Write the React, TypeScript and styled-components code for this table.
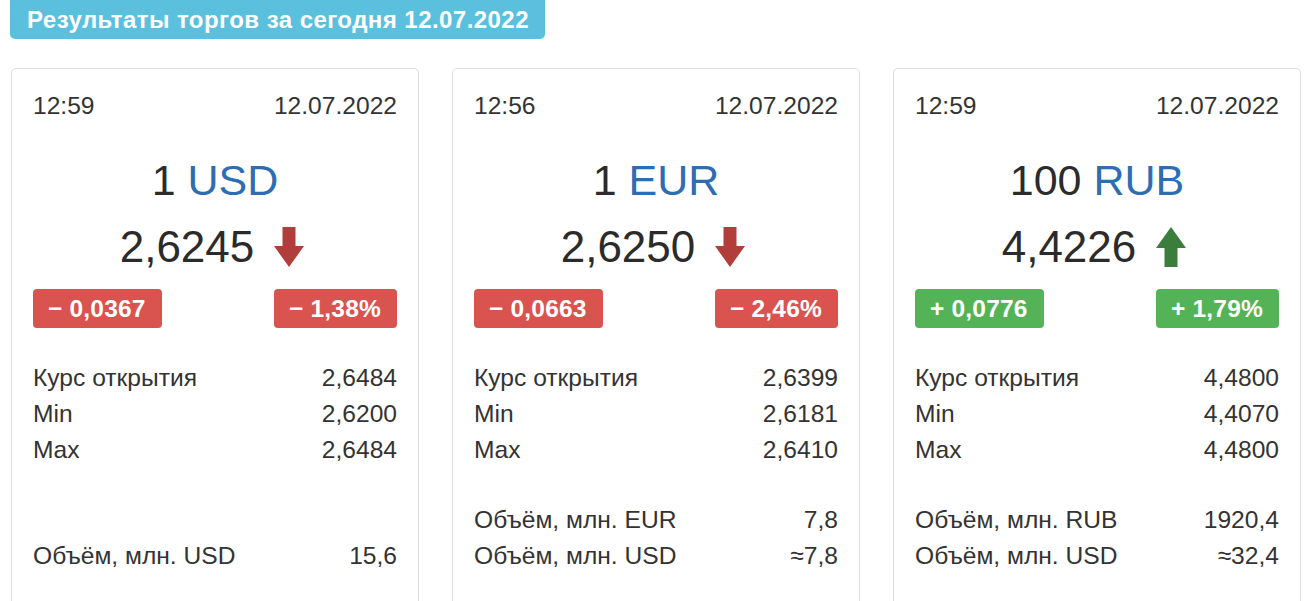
import React from "react";
import styled, { createGlobalStyle } from "styled-components";

const Global = createGlobalStyle`
  html, body { margin: 0; padding: 0; background: #fff; }
  body { font-family: "Liberation Sans", Arial, sans-serif; color: #333; }
`;

const Page = styled.div`
  padding: 0 4px 0 11px;
  display: flex;
  flex-direction: column;
`;

const Heading = styled.div`
  align-self: flex-start;
  margin-left: -1px;
  background: #5bc0de;
  color: #fff;
  font-weight: 700;
  font-size: 24px;
  line-height: 39px;
  height: 39px;
  padding: 0 16px 0 17px;
  border-radius: 0 0 5px 5px;
  letter-spacing: 0.45px;
`;

const Cards = styled.div`
  margin-top: 29px;
  display: grid;
  grid-template-columns: repeat(3, 408px);
  column-gap: 33px;
  align-items: stretch;
`;

const Card = styled.div`
  border: 1px solid #dedede;
  border-radius: 5px;
  padding: 19px 21px 40px 21px;
  display: flex;
  flex-direction: column;
`;

const TopRow = styled.div`
  display: flex;
  justify-content: space-between;
  font-size: 24.6px;
  line-height: 36px;
`;

const Title = styled.div`
  margin-top: 32px;
  text-align: center;
  font-size: 43px;
  line-height: 48px;
  color: #2b2b2b;
`;

const Code = styled.span`
  color: #2f6db2;
`;

const PriceRow = styled.div`
  margin-top: 19px;
  display: flex;
  justify-content: center;
  align-items: center;
  gap: 20px;
  font-size: 44px;
  line-height: 48px;
  color: #2b2b2b;
  padding-right: 6px;
`;

const Arrow = styled.svg<{ $up: boolean }>`
  width: 30px;
  height: 40px;
  fill: ${(p) => (p.$up ? "#3b7d3b" : "#b13e3b")};
  transform: ${(p) => (p.$up ? "none" : "rotate(180deg)")};
`;

const Badges = styled.div`
  margin-top: 18px;
  display: flex;
  justify-content: space-between;
`;

const Badge = styled.span<{ $up: boolean }>`
  background: ${(p) => (p.$up ? "#53b356" : "#d9534f")};
  color: #fff;
  font-weight: 700;
  font-size: 24.5px;
  letter-spacing: 0.2px;
  line-height: 39px;
  height: 39px;
  padding: 0 16px 0 15px;
  border-radius: 4px;
`;

const Rows = styled.div`
  margin-top: 32px;
  display: flex;
  flex-direction: column;
`;

const Volume = styled(Rows)`
  margin-top: auto;
  padding-top: 35px;
`;

const Row = styled.div`
  display: flex;
  justify-content: space-between;
  font-size: 24.6px;
  line-height: 35.8px;
  color: #333;
`;

type Item = {
  time: string;
  amount: string;
  code: string;
  price: string;
  up: boolean;
  diff: string;
  pct: string;
  open: string;
  min: string;
  max: string;
  volume: [string, string][];
};

const data: Item[] = [
  {
    time: "12:59",
    amount: "1",
    code: "USD",
    price: "2,6245",
    up: false,
    diff: "− 0,0367",
    pct: "− 1,38%",
    open: "2,6484",
    min: "2,6200",
    max: "2,6484",
    volume: [["Объём, млн. USD", "15,6"]],
  },
  {
    time: "12:56",
    amount: "1",
    code: "EUR",
    price: "2,6250",
    up: false,
    diff: "− 0,0663",
    pct: "− 2,46%",
    open: "2,6399",
    min: "2,6181",
    max: "2,6410",
    volume: [
      ["Объём, млн. EUR", "7,8"],
      ["Объём, млн. USD", "≈7,8"],
    ],
  },
  {
    time: "12:59",
    amount: "100",
    code: "RUB",
    price: "4,4226",
    up: true,
    diff: "+ 0,0776",
    pct: "+ 1,79%",
    open: "4,4800",
    min: "4,4070",
    max: "4,4800",
    volume: [
      ["Объём, млн. RUB", "1920,4"],
      ["Объём, млн. USD", "≈32,4"],
    ],
  },
];

const ArrowIcon = ({ up }: { up: boolean }) => (
  <Arrow $up={up} viewBox="0 0 30 40">
    <polygon points="15,0 30,21 21.5,21 21.5,40 8.5,40 8.5,21 0,21" />
  </Arrow>
);

export default function App() {
  return (
    <>
      <Global />
      <Page>
        <Heading>Результаты торгов за сегодня 12.07.2022</Heading>
        <Cards>
          {data.map((d) => (
            <Card key={d.code}>
              <TopRow>
                <span>{d.time}</span>
                <span>12.07.2022</span>
              </TopRow>
              <Title>
                {d.amount} <Code>{d.code}</Code>
              </Title>
              <PriceRow>
                <span>{d.price}</span>
                <ArrowIcon up={d.up} />
              </PriceRow>
              <Badges>
                <Badge $up={d.up}>{d.diff}</Badge>
                <Badge $up={d.up}>{d.pct}</Badge>
              </Badges>
              <Rows>
                <Row>
                  <span>Курс открытия</span>
                  <span>{d.open}</span>
                </Row>
                <Row>
                  <span>Min</span>
                  <span>{d.min}</span>
                </Row>
                <Row>
                  <span>Max</span>
                  <span>{d.max}</span>
                </Row>
              </Rows>
              <Volume>
                {d.volume.map(([l, v]) => (
                  <Row key={l}>
                    <span>{l}</span>
                    <span>{v}</span>
                  </Row>
                ))}
              </Volume>
            </Card>
          ))}
        </Cards>
      </Page>
    </>
  );
}
